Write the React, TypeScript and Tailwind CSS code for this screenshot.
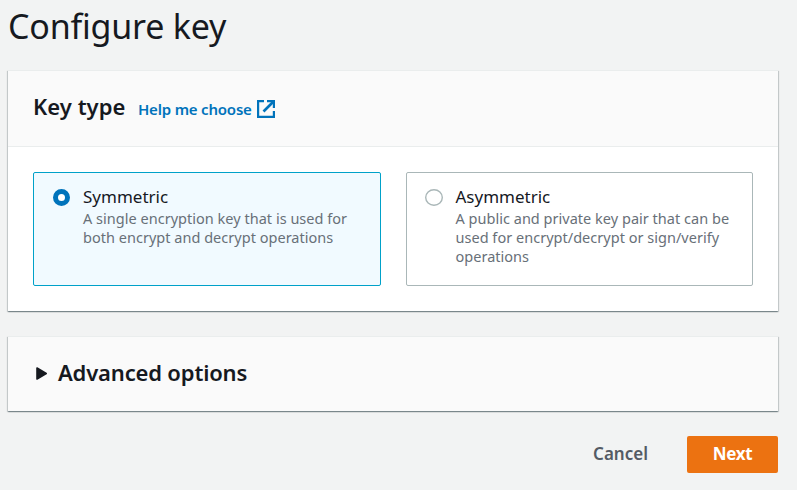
import React from "react";

const cardShadow =
  "border-t border-[#eaeded] shadow-[0_1px_1px_0_rgba(0,28,36,0.3),1px_1px_1px_0_rgba(0,28,36,0.15),-1px_1px_1px_0_rgba(0,28,36,0.15)]";

function ExternalIcon() {
  return (
    <svg className="ml-[5px] mt-px block h-[18px] w-[18px]" viewBox="0 0 18 18" fill="none" stroke="#0073bb" strokeWidth="2.200">
      <path d="M7 1.100H1.100v15.800h15.800v-5.900" />
      <path d="M10 1.100h6.900V8" />
      <path d="M16.500 1.500L6.500 11.500" strokeWidth="2.600" />
    </svg>
  );
}

function Radio({ checked }: { checked: boolean }) {
  if (checked) {
    return <span className="mt-4 block h-[17px] w-[17px] shrink-0 rounded-full border-[5px] border-[#0073bb] bg-white" />;
  }
  return (
    <svg className="mt-4 block h-[17px] w-[18px] shrink-0" viewBox="0 0 18 17">
      <ellipse cx="9" cy="8.500" rx="8.300" ry="7.800" fill="#fff" stroke="#aab7b8" strokeWidth="1.400" />
    </svg>
  );
}

function Tile({ checked, title, lines }: { checked: boolean; title: React.ReactNode; lines: React.ReactNode }) {
  return (
    <div
      className={
        checked
          ? "flex h-[114px] w-[348px] rounded-[2px] border border-[#00a1c9] bg-[#f1faff] pl-[19px]"
          : "flex h-[114px] w-[347px] rounded-[2px] border border-[#aab7b8] bg-white pl-[18px]"
      }
    >
      <Radio checked={checked} />
      <div className={checked ? "ml-[13px] whitespace-nowrap pt-3" : "ml-[12.5px] whitespace-nowrap pt-3"}>
        <div className="text-[17px] leading-6 text-[#16191f]">{title}</div>
        <div className="text-[14.5px] leading-[19px] tracking-[0.02px] text-[#687078]">{lines}</div>
      </div>
    </div>
  );
}

export default function App() {
  return (
    <div className="h-[490px] w-[797px] overflow-hidden bg-[#f2f3f3] pl-2 font-['Noto_Sans',sans-serif] text-[#16191f]">
      <h1 className="h-[70px] whitespace-nowrap pt-[2px] text-[34px] leading-[48px] tracking-[-0.2px]">
        <span>Configure key</span>
      </h1>
      <section className={`h-[241px] w-[770px] bg-white ${cardShadow}`}>
        <header className="flex h-[76px] items-start whitespace-nowrap border-b border-[#eaeded] bg-[#fafafa] pl-[25px]">
          <h2 className="pt-5 text-[22px] font-semibold leading-[30px] tracking-[0.05px]">
            <span>Key type</span>
          </h2>
          <a className="ml-[12.5px] flex pt-[28px] text-[15px] font-semibold leading-5 tracking-[-0.2px] text-[#0073bb]">
            <span>Help me choose</span>
            <ExternalIcon />
          </a>
        </header>
        <div className="flex gap-[25px] pl-[25px] pt-[25px]">
          <Tile
            checked
            title={<span>Symmetric</span>}
            lines={
              <>
                <span>A single encryption key that is used for</span>
                <br />
                <span>both encrypt and decrypt operations</span>
              </>
            }
          />
          <Tile
            checked={false}
            title={<span>Asymmetric</span>}
            lines={
              <>
                <span>A public and private key pair that can be</span>
                <br />
                <span>used for encrypt/decrypt or sign/verify</span>
                <br />
                <span>operations</span>
              </>
            }
          />
        </div>
      </section>
      <section className={`mt-[25px] flex h-[75px] w-[770px] items-start whitespace-nowrap bg-[#fafafa] pl-7 ${cardShadow}`}>
        <svg className="mt-[30px] block h-[13px] w-[11px]" viewBox="0 0 11 13">
          <path d="M1 1L10.200 6.500L1 12Z" fill="#16191f" stroke="#16191f" strokeWidth="1.600" strokeLinejoin="round" />
        </svg>
        <h2 className="ml-[11px] pt-5 text-[22px] font-semibold leading-[30px] tracking-[-0.17px]">
          <span>Advanced options</span>
        </h2>
      </section>
      <div className="mt-[25px] flex h-[37px] w-[770px] items-center justify-end whitespace-nowrap text-[17px] font-semibold">
        <span className="mr-[39px] pb-0.5 text-[#545b64]">Cancel</span>
        <button className="h-[37px] w-[91px] rounded-[2px] bg-[#ec7211] pb-0.5 font-bold tracking-[-0.3px] text-white">
          <span>Next</span>
        </button>
      </div>
    </div>
  );
}
